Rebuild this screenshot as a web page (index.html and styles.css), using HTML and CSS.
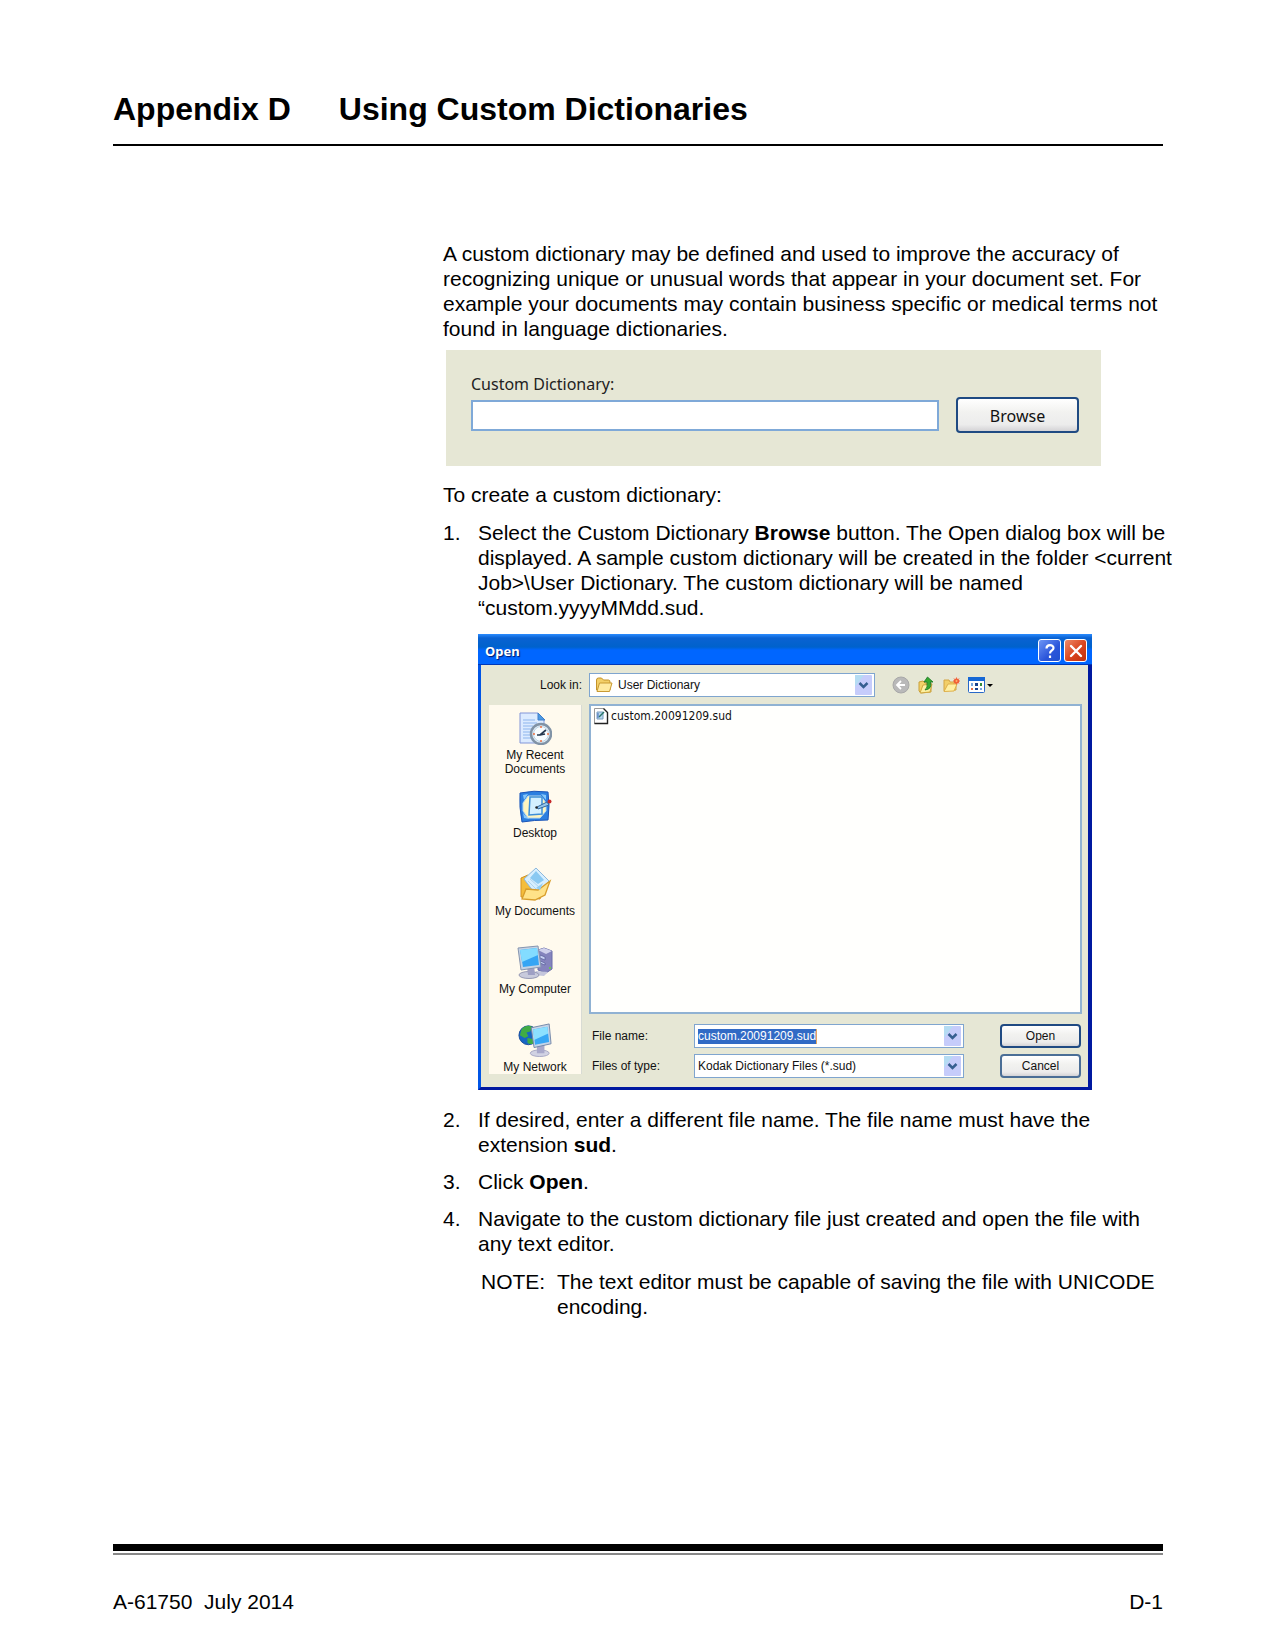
FILE: index.html
```html
<!DOCTYPE html>
<html lang="en">
<head>
<meta charset="utf-8">
<title>Appendix D - Using Custom Dictionaries</title>
<link rel="stylesheet" href="styles.css">
</head>
<body>
<div class="page">
  <header class="page-header">
    <h1 class="title"><span class="title-part">Appendix D</span><span>Using Custom Dictionaries</span></h1>
  </header>

  <main class="content">
    <p>A custom dictionary may be defined and used to improve the accuracy of recognizing unique or unusual words that appear in your document set. For example your documents may contain business specific or medical terms not found in language dictionaries.</p>

    <form class="dict-panel">
      <label class="dict-label" for="dict">Custom Dictionary:</label>
      <div class="dict-row">
        <input class="dict-input" id="dict" type="text">
        <button class="xp-button xp-default dict-browse" type="button">Browse</button>
      </div>
    </form>

    <p>To create a custom dictionary:</p>

    <ol class="steps">
      <li class="step">
        <span>1.</span>
        <div>
          <p>Select the Custom Dictionary <b>Browse</b> button. The Open dialog box will be displayed. A sample custom dictionary will be created in the folder &lt;current Job&gt;\User Dictionary. The custom dictionary will be named “custom.yyyyMMdd.sud.</p>

          <section class="dialog" aria-label="Open">
            <div class="titlebar">
              <span class="titlebar-text">Open</span>
              <button class="caption-button" type="button" aria-label="Help">
                <svg width="22" height="22" viewBox="0 0 22 22"><path d="M7.500 8.500C7.500 4 14.500 4 14.500 8c0 2.500-3.500 2.500-3.500 5.500M11 15.500v2.500" fill="none" stroke="#fff" stroke-width="2.200"/></svg>
              </button>
              <button class="caption-button caption-close" type="button" aria-label="Close">
                <svg width="22" height="22" viewBox="0 0 22 22"><path d="M6 6l10 10M16 6L6 16" fill="none" stroke="#fff" stroke-width="2.400" stroke-linecap="round"/></svg>
              </button>
            </div>

            <div class="dialog-body">
              <label class="look-label" for="look">Look in:</label>
              <div class="look-row">
                <div class="combo look-combo">
                  <svg class="combo-icon" width="18" height="16" viewBox="0 0 18 16"><path d="M1.500 13V3q0-2 2-2h3l2 2h5q1.500 0 1.500 2v8z" fill="#f3cf67" stroke="#c49329"/><path d="M2 14.500L4.500 6H17l-2.500 8.500z" fill="#ffeaa0" stroke="#c99a33"/></svg>
                  <select class="combo-field look-select" id="look"><option>User Dictionary</option></select>
                  <svg class="combo-arrow" width="17" height="20" viewBox="0 0 17 20"><rect width="17" height="20" rx="1" fill="#c6ccfb"/><path d="M0 0h9L0 12z" fill="#b5dcf3"/><path d="M4.500 8l4 4 4-4" fill="none" stroke="#365f91" stroke-width="2.500"/></svg>
                </div>
                <div class="toolbar">
                  <button class="tool" type="button" aria-label="Back"><svg width="18" height="18" viewBox="0 0 18 18"><circle cx="9" cy="9" r="8" fill="#b9b9b9" stroke="#a8a8a8"/><path d="M13 9H5.500M9 5L5 9l4 4" fill="none" stroke="#fff" stroke-width="1.800"/></svg></button>
                  <button class="tool" type="button" aria-label="Up One Level"><svg width="18" height="18" viewBox="0 0 18 18"><path d="M2 15V6l4-1 2 2h6v9l-10 1z" fill="#f2d268" stroke="#c9a03a"/><path d="M3 17l3-8 9-1-2 8z" fill="#fdf0a0" stroke="#d0a840"/><path d="M8 14q3-2 2-8H7L10.500 1 16 6h-2.500q2 7-5.500 8z" fill="#36a82f" stroke="#1b7524" stroke-width=".8"/></svg></button>
                  <button class="tool" type="button" aria-label="Create New Folder"><svg width="18" height="18" viewBox="0 0 18 18"><path d="M2 15V4h5l1 2h6v8z" fill="#f2cf68" stroke="#d4a542"/><path d="M2 15.500L6 8h9l-3 7z" fill="#fff0a2" stroke="#dfb14c"/><circle cx="14.500" cy="5" r="2.600" fill="#f2552c"/><path d="M14.500 1.500v7M11 5h7M12 2.500l5 5M17 2.500l-5 5" stroke="#f2653c" stroke-width="1"/><circle cx="14.500" cy="5" r="1" fill="#ffb06a"/></svg></button>
                  <button class="tool" type="button" aria-label="View Menu"><svg width="27" height="18" viewBox="0 0 27 18"><rect x="1.500" y="1.500" width="16" height="15" rx="1" fill="#fff" stroke="#2868c8"/><path d="M1 1h17v4H1z" fill="#1768d5"/><path d="M4 7h2v3H4zM13 12h2v2h-2z" fill="#79a6dc"/><path d="M8 7h3v3H8zM8 12h3v2H8z" fill="#1b438e"/><path d="M13 7h2v3h-2z" fill="#348a3b"/><path d="M4 12h2v2H4z" fill="#df704b"/><path d="M20 8h6l-3 3z" fill="#000"/></svg></button>
                </div>
              </div>

              <nav class="places">
                <a class="place" href="#recent">
                  <svg width="34" height="34" viewBox="0 0 34 34"><path d="M2 2h18l6 6v24H2z" fill="#dcebff" stroke="#8296d8"/><path d="M20 2v7h7z" fill="#4c9ae4" stroke="#417fca"/><path d="M5 9h12M5 12h14M5 15h10M5 18h9M5 21h8M5 24h8M5 27h9" stroke="#8db5ed"/><circle cx="23" cy="23" r="10" fill="#e7f2fb" stroke="#8193a6" stroke-width="2.500"/><circle cx="23" cy="23" r="7.500" fill="#f7fcff" stroke="#bdd3e3"/><path d="M23 15v2M23 29v2M15 23h2M29 23h2" stroke="#ef7040" stroke-width="1.500"/><path d="M28 19l-6 5h-3M22 24l5-1" fill="none" stroke="#26384f" stroke-width="1.700"/></svg>
                  <span>My Recent<br>Documents</span>
                </a>
                <a class="place" href="#desktop">
                  <svg width="34" height="34" viewBox="0 0 34 34"><path d="M2 4q14-3 28-1 2 14 0 28-14 0-26 2Q1 18 2 4z" fill="#2c7fe0" stroke="#1b55b8"/><path d="M5 6l5-1-4 6zM28 6l-5-1 5 6zM6 29l5 1-6-6z" fill="#87c7fa"/><path d="M10 7h13l5 7v8l-6 7H10l-5-7v-8z" fill="#fff5bf" stroke="#b8dbf1"/><path d="M12 8h12v17l-13 1z" fill="#d4f0ff" stroke="#3e8fd8" stroke-width="1.500"/><path d="M19 18l10-5 2 3-11 4z" fill="#94c6ed" stroke="#31669f"/><circle cx="31.500" cy="12.500" r="2" fill="#c6282b"/><circle cx="18.500" cy="18.500" r="1.200" fill="#222"/></svg>
                  <span>Desktop</span>
                </a>
                <a class="place" href="#documents">
                  <svg width="34" height="34" viewBox="0 0 34 34"><path d="M3 11l7-3 3 3 15 2-6 19-19-2z" fill="#f4bd3c" stroke="#d19222"/><path d="M6 12L18 1l13 13-13 14z" fill="#d7efff" stroke="#8db8dd"/><path d="M12 11l6-7 8 9-6 4z" fill="#8ac9f2"/><path d="M10 14l9 9M12 12l10 9" stroke="#aed4ee"/><path d="M4 32l4-10 12 1 12-9-5 14-10 5z" fill="#ffe288" stroke="#d89d2b" stroke-width="1.300"/><path d="M18 21l7-5-3 7z" fill="#94cef2"/></svg>
                  <span>My Documents</span>
                </a>
                <a class="place" href="#computer">
                  <svg width="38" height="34" viewBox="0 0 38 34"><path d="M22 5l6-2 8 3v18l-6 4-8-3z" fill="#8584bd" stroke="#696da9"/><path d="M22 5l6-2 8 3-6 3z" fill="#d0d1ec"/><path d="M24 10l5 2v3l-5-2zM24 16l5 2v2l-5-2z" fill="#c9d2f5" stroke="#565b96" stroke-width=".7"/><path d="M34 22v2" stroke="#71c356" stroke-width="2"/><path d="M20 26l12 1-4 4-10-1z" fill="#c5c6dc"/><ellipse cx="13" cy="30" rx="10" ry="3.500" fill="#c8cadc" stroke="#9699b3"/><path d="M11 22l7-2 1 10h-7z" fill="#9fa0c4"/><path d="M2 3l20-2 3 21-20 3z" fill="#c4d2e4" stroke="#8695b0"/><path d="M4 5l17-2 2 17L7 22z" fill="#35a5f4"/><path d="M4 5l17-2 1 7-16 7z" fill="#83dcff"/></svg>
                  <span>My Computer</span>
                </a>
                <a class="place" href="#network">
                  <svg width="36" height="36" viewBox="0 0 36 36"><circle cx="11" cy="13" r="10" fill="#1766c4" stroke="#1b4c9c"/><path d="M4 6q5-5 11-2l-2 5-4 1 2 4-4 2-5-3zM10 16l6 1v5q-4 1-6-1z" fill="#40ac45"/><ellipse cx="23" cy="32" rx="10" ry="3.500" fill="#d1d2e3" stroke="#a5a6c2"/><path d="M20 24l8-1v9h-8z" fill="#a9a9cb"/><path d="M14 5l19-4 2 21-18 4z" fill="#c6d5e7" stroke="#7386a7"/><path d="M16 7l15-3 2 16-15 3z" fill="#37a7f5"/><path d="M16 7l15-3 1 7-15 7z" fill="#8ce0ff"/></svg>
                  <span>My Network</span>
                </a>
              </nav>

              <div class="files">
                <ul class="file-list">
                  <li class="file">
                    <svg width="16" height="18" viewBox="0 0 16 18"><path d="M1.500 1.500h9l4 4v11h-13z" fill="#fff" stroke="#999"/><path d="M10.500 1.500l4 4v11h-13" fill="none" stroke="#222" stroke-width="1.400"/><path d="M4 5h6v7H4z" fill="#b9d7ee" stroke="#789dbf"/><path d="M6 10l5-5" stroke="#287567" stroke-width="1.500"/><path d="M5 6v5" stroke="#416eb8"/></svg>
                    <span>custom.20091209.sud</span>
                  </li>
                </ul>
                <form class="fields">
                  <label for="fname">File name:</label>
                  <div class="combo">
                    <div class="combo-edit"><input class="name-input" id="fname" type="text" value="custom.20091209.sud"></div>
                    <svg class="combo-arrow" width="17" height="20" viewBox="0 0 17 20"><rect width="17" height="20" rx="1" fill="#c6ccfb"/><path d="M0 0h9L0 12z" fill="#b5dcf3"/><path d="M4.500 8l4 4 4-4" fill="none" stroke="#365f91" stroke-width="2.500"/></svg>
                  </div>
                  <button class="xp-button xp-default" type="button">Open</button>
                  <label for="ftype">Files of type:</label>
                  <div class="combo">
                    <select class="combo-field" id="ftype"><option>Kodak Dictionary Files (*.sud)</option></select>
                    <svg class="combo-arrow" width="17" height="20" viewBox="0 0 17 20"><rect width="17" height="20" rx="1" fill="#c6ccfb"/><path d="M0 0h9L0 12z" fill="#b5dcf3"/><path d="M4.500 8l4 4 4-4" fill="none" stroke="#365f91" stroke-width="2.500"/></svg>
                  </div>
                  <button class="xp-button" type="button">Cancel</button>
                </form>
              </div>
            </div>
          </section>
        </div>
      </li>
      <li class="step"><span>2.</span><p>If desired, enter a different file name. The file name must have the extension <b>sud</b>.</p></li>
      <li class="step"><span>3.</span><p>Click <b>Open</b>.</p></li>
      <li class="step">
        <span>4.</span>
        <div>
          <p>Navigate to the custom dictionary file just created and open the file with any text editor.</p>
          <div class="note"><span>NOTE:</span><p>The text editor must be capable of saving the file with UNICODE encoding.</p></div>
        </div>
      </li>
    </ol>
  </main>

  <footer class="page-footer">
    <span class="doc-id">A-61750  July 2014</span>
    <span>D-1</span>
  </footer>
</div>
</body>
</html>
```

FILE: styles.css
```css
* {
  box-sizing: border-box;
}

body {
  margin: 0;
  background: #fff;
  color: #000;
  font: 21px/25px "Liberation Sans", Arial, sans-serif;
}

p,
ol,
ul {
  margin: 0;
  padding: 0;
  list-style: none;
}

.page {
  display: flex;
  flex-direction: column;
  min-height: 100vh;
  padding: 89px 112px 36px 113px;
}

.page-header {
  padding-bottom: 15px;
  border-bottom: 2px solid #000;
}

.title {
  display: flex;
  gap: 48px;
  margin: 0;
  font-size: 32px;
  line-height: 40px;
}

.content {
  flex: 1;
  margin-right: -16px;
  padding: 95px 0 48px 330px;
}

/* Custom Dictionary field */

.dict-panel {
  max-width: 655px;
  height: 116px;
  margin: 9px 0 16px 3px;
  padding: 23px 22px 0 25px;
  background: #e6e7d5;
  font: 16px/22px "Noto Sans", Tahoma, sans-serif;
}

.dict-label {
  display: block;
  color: #222;
}

.dict-row {
  display: flex;
  align-items: center;
  gap: 17px;
  margin-top: 2px;
}

.dict-input {
  flex: 1;
  min-width: 0;
  height: 31px;
  padding: 0 6px;
  border: 2px solid #7fa9d8;
  background: #fff;
  font: inherit;
}

.xp-button {
  height: 24px;
  padding: 0;
  border: 2px solid #4a6e96;
  border-radius: 4px;
  background: linear-gradient(#fff, #f2f2f0 40%, #ececec 80%, #d4d3d6);
  color: #111;
  font: inherit;
}

.xp-default {
  border-color: #1f4a82;
}

.dict-browse {
  width: 123px;
  height: 36px;
  padding-top: 2px;
}

/* Numbered steps */

.steps {
  display: flex;
  flex-direction: column;
  gap: 12px;
  margin-top: 13px;
}

.step {
  display: grid;
  grid-template-columns: 35px 1fr;
}

.note {
  display: grid;
  grid-template-columns: 76px 1fr;
  margin: 13px 0 0 3px;
}

/* Open dialog */

.dialog {
  max-width: 614px;
  margin: 14px 0 5px;
  border: solid #0a2bbb;
  border-width: 0 4px 3px 3px;
  border-left-color: #0055e6;
  border-right-color: #0019a0;
  border-bottom-color: #0019a0;
  background: #e6e7d5;
  color: #111;
  font-size: 12px;
  line-height: 14px;
}

.titlebar {
  display: flex;
  align-items: center;
  gap: 3px;
  height: 31px;
  margin: 0 -4px 0 -3px;
  padding: 2px 5px 0 7px;
  border-bottom: 1px solid #0038b8;
  background: linear-gradient(#2a8cff 0, #0a62d2 4px, #0062cc 13px, #0066ff 16px, #0066ff);
}

.titlebar-text {
  flex: 1;
  padding-top: 2px;
  color: #fff;
  font: bold 13px/18px "Noto Sans", Tahoma, sans-serif;
  text-shadow: 1px 1px 1px #00186b;
}

.caption-button {
  display: grid;
  place-items: center;
  width: 23px;
  height: 23px;
  padding: 0;
  border: 1px solid #fff;
  border-radius: 3px;
  background: linear-gradient(135deg, #6e96f5, #2a55da 60%, #2050d0);
}

.caption-close {
  background: linear-gradient(135deg, #ee8a68, #d9431d 55%, #c0310f);
}

.dialog-body {
  display: grid;
  grid-template-columns: 93px 1fr;
  gap: 7px;
  padding: 8px 6px 9px 8px;
}

.look-label {
  align-self: center;
  text-align: right;
}

.look-row {
  display: flex;
  align-items: center;
  gap: 17px;
}

.look-combo {
  width: 286px;
}

.combo {
  display: flex;
  align-items: center;
  height: 24px;
  padding: 0 2px 0 3px;
  border: 1px solid #7fa5cf;
  background: #fff;
}

.combo-icon {
  margin: 0 2px;
}

.combo-field {
  flex: 1;
  min-width: 0;
  height: 20px;
  padding: 0;
  border: 0;
  background: transparent;
  color: #111;
  font: inherit;
  appearance: none;
}

.look-select {
  padding-left: 3px;
}

.combo-edit {
  display: flex;
  flex: 1;
}

.name-input {
  width: 119px;
  height: 15px;
  padding: 0;
  border: 0;
  border-right: 1px solid #e0a860;
  background: #316ac5;
  color: #fff;
  font: inherit;
}

.toolbar {
  display: flex;
  gap: 7px;
}

.tool {
  display: block;
  padding: 0;
  border: 0;
  background: none;
}

.tool svg {
  display: block;
}

.places {
  margin: 1px 0 4px;
  padding-top: 6px;
  border-right: 1px solid #d8dbd4;
  background: #fffaee;
}

.place {
  display: flex;
  flex-direction: column;
  align-items: center;
  gap: 3px;
  height: 78px;
  color: #111;
  text-align: center;
  text-decoration: none;
  white-space: nowrap;
}

.place:last-child {
  height: auto;
}

.place svg {
  height: 34px;
}

.file-list {
  height: 310px;
  padding-top: 1px;
  border: 2px solid #90b2d3;
  background: #fffffd;
  font: 12px/18px "DejaVu Sans Condensed", Tahoma, sans-serif;
}

.file {
  display: flex;
  align-items: center;
  gap: 2px;
  padding-left: 2px;
}

.fields {
  display: grid;
  grid-template-columns: 102px 270px 81px;
  row-gap: 6px;
  align-items: center;
  margin-top: 10px;
  padding-left: 3px;
}

.fields .xp-button {
  width: 81px;
  margin-left: 36px;
}

/* Footer */

.page-footer {
  position: relative;
  display: flex;
  justify-content: space-between;
  padding-top: 38px;
  border-top: 7px solid #000;
}

.page-footer::before {
  content: "";
  position: absolute;
  top: 2px;
  right: 0;
  left: 0;
  height: 2px;
  background: #888;
}

.doc-id {
  white-space: pre;
}
```
